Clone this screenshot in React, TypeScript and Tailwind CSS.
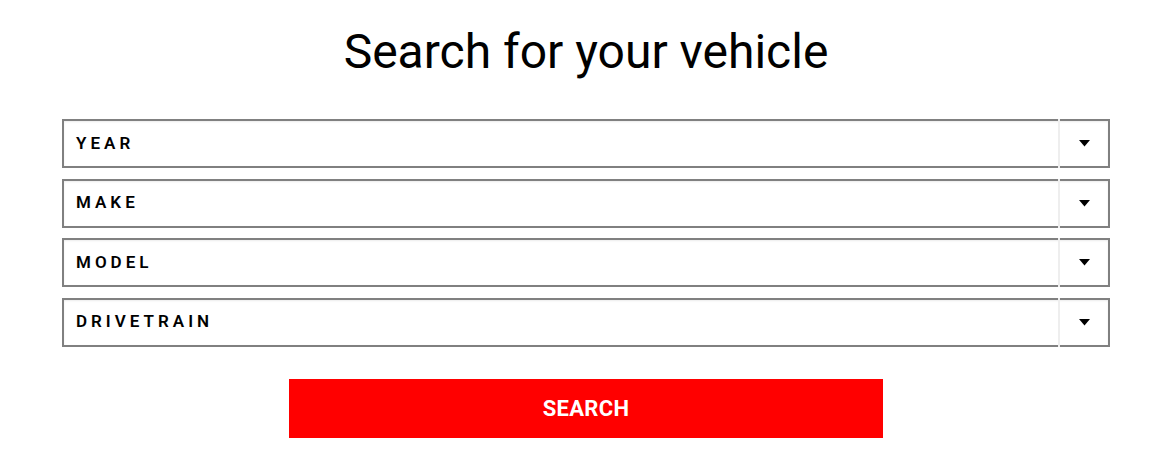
import React from "react";

const fields = ["YEAR", "MAKE", "MODEL", "DRIVETRAIN"];

function Caret() {
  return (
    <svg width="11" height="7" viewBox="0 0 11 7">
      <path d="M0 0 L11 0 L5.5 6.5 Z" fill="#000" />
    </svg>
  );
}

export default function App() {
  return (
    <div className="w-[1168px] h-[476px] bg-white flex flex-col items-center pl-[4px]" style={{ fontFamily: "Roboto, 'Liberation Sans', sans-serif" }}>
      <h1 className="mt-[22px] text-[48px] leading-[60px] text-black font-normal">Search for your vehicle</h1>
      <div className="mt-[37px] w-[1048px] flex flex-col gap-[10.5px]">
        {fields.map((f) => (
          <div key={f} className="relative h-[49px] border-2 border-[#808080] bg-white shadow-[inset_0_1px_2px_rgba(0,0,0,0.08)] flex items-center">
            <span className="pl-[12px] text-[17px] font-semibold tracking-[4px] text-black">{f}</span>
            <div className="absolute right-0 top-[-2px] bottom-[-2px] w-[50px] border-l-2 border-[#eeeeee] flex items-center justify-center">
              <Caret />
            </div>
          </div>
        ))}
      </div>
      <button className="mt-[32px] w-[594px] h-[59px] bg-[#ff0000] text-white text-[22px] font-bold tracking-[0.3px]">SEARCH</button>
    </div>
  );
}
